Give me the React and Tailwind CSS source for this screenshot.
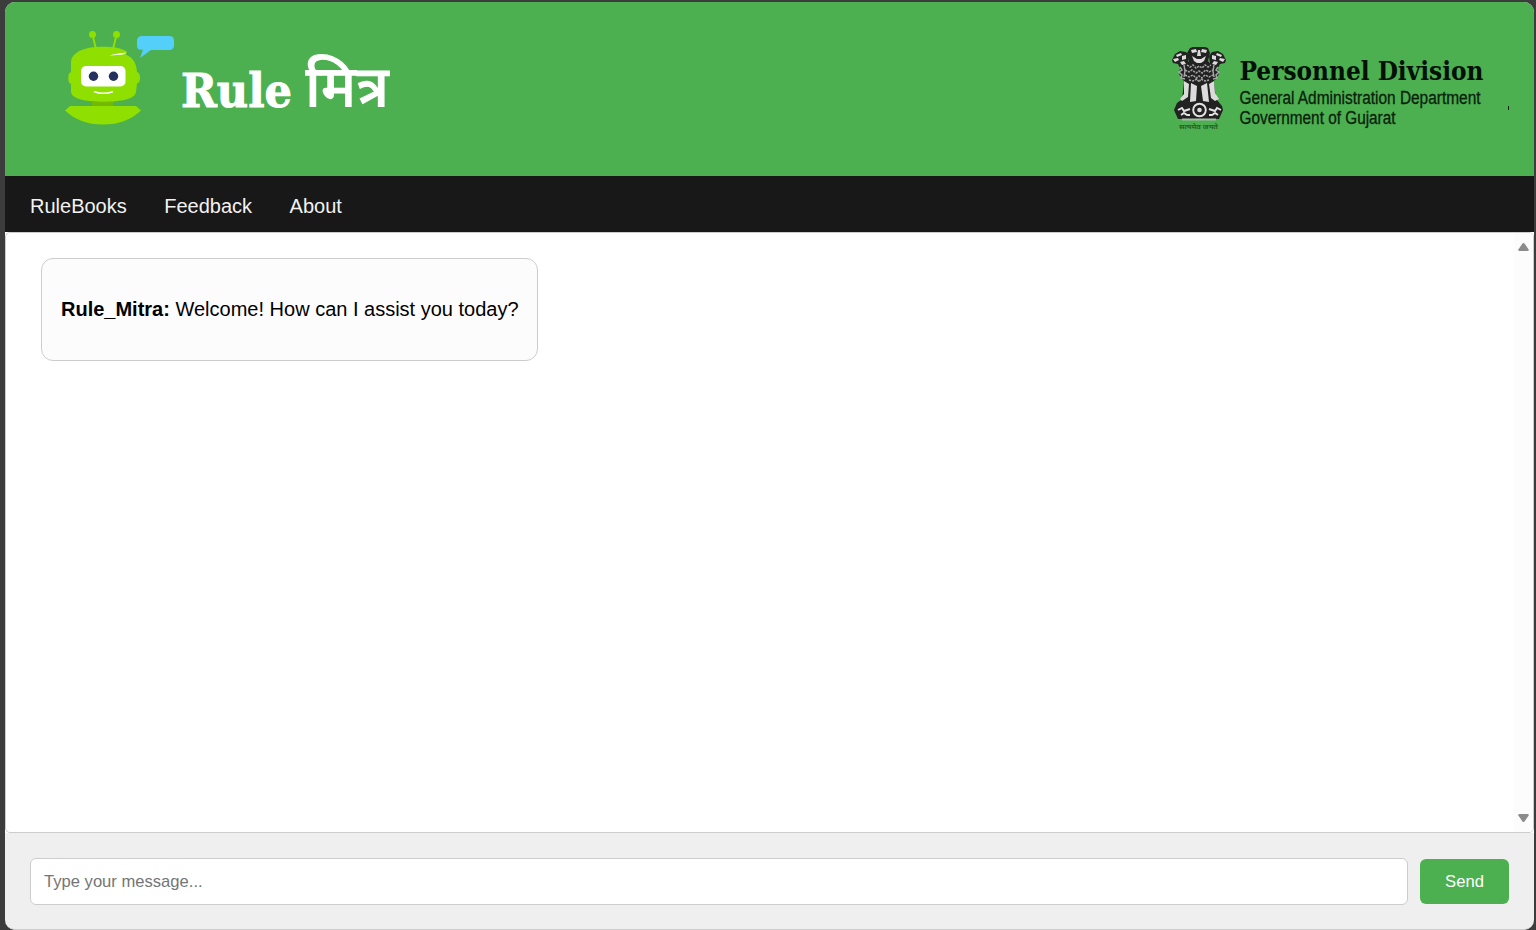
function BotLogo() {
  return (
    <svg className="block shrink-0" width="120" height="110" viewBox="0 0 120 110" aria-hidden="true">
      <g fill="#8fdf00">
        <circle cx="37.500" cy="14.500" r="3.500" />
        <circle cx="61.500" cy="14.500" r="3.500" />
        <path d="M37.500 15L41 29M61.500 15L58 29" stroke="#8fdf00" strokeWidth="2" />
        <path d="M48 26.700C58 26.700 67 28 72 31.700L70.500 34.500C77 37 81.500 42 82 52C84.300 52.500 85 55 85 58C85 61 84.300 63 82 63.500L81 72C80 79 67 81.700 48.500 81.700C30 81.700 17 79 16 72V64C14 63.500 13.300 61 13.300 58C13.300 55 14 52.500 16 52V42C17 31 31 26.700 48 26.700Z" />
        <path d="M15 86h66l5 4.500C76 100 64 104.500 48 104.500S20 100 10 90.500z" />
      </g>
      <path d="M37 82h21v4H37z" fill="#73b900" />
      <path d="M54 36C59 33.800 65 33.200 71.500 32.800C70 34.200 67 34.800 64 34.800C60 34.800 57 35.600 54 36Z" fill="#fff" />
      <rect x="26" y="46" width="44.500" height="20.500" rx="5" fill="#fff" />
      <circle cx="38.500" cy="56.200" r="4.700" fill="#24305e" />
      <circle cx="58.500" cy="56.200" r="4.700" fill="#24305e" />
      <path d="M39.500 71.700c5 2.200 13 2.200 18 0" fill="none" stroke="#fff" strokeWidth="1.500" strokeLinecap="round" />
      <path d="M86.500 16h28.500a4.500 4.500 0 0 1 4 4.500v5a4.500 4.500 0 0 1-4 4.400H96L85 38l3-8.200h-2a4 4 0 0 1-4-4v-5.300a4.500 4.500 0 0 1 4.500-4.500z" fill="#54cffa" />
    </svg>
  );
}

function Emblem() {
  return (
    <svg className="block shrink-0" width="60" height="86" viewBox="0 0 60 86" aria-hidden="true">
      <g fill="#222">
        <path d="M21 2l3-1h12l3 1 2 5-2 8 4 5 3 8-1 8 2 18H13l2-18-2-8 3-8 4-5-2-8z" />
        <path d="M3 14l3-6 5-3 6 1 3 4-1 8 0 17-5-1-4-6 1-6-2-4-5-1zM57 14l-3-6-5-3-6 1-3 4 1 8 0 17 5-1 4-6-1-6 2-4 5-1z" />
        <path d="M12 54l36 0 5 6 1 4-4 9H9L5 64l3-7z" />
      </g>
      <g fill="#dcdcdc">
        <path d="M22 4l5-1 1 3-5 1zM38 4l-5-1-1 3 5 1zM29 4h2l1 6h-4zM23 10l5 3h4l5-3-2 5-3 2h-4l-3-2z" />
        <path d="M7 9l5-2 1 2-5 2zM53 9l-5-2-1 2 5 2zM4 13l5-1 1 2-4 2zM56 13l-5-1-1 2 4 2zM13 10l4-1 0 4-4 1zM47 10l-4-1 0 4 4 1zM11 16l4-1 2 3-4 1zM49 16l-4-1-2 3 4 1z" />
        <path d="M15 35l5 3-1 13-6 4-2-2 4-5zM22 37l6 3-1 15-6 1zM32 40l6-3 2 19-6-1zM40 38l5-3 1 12 4 6-4 2-4-3z" />
      </g>
      <g fill="none" stroke="#a5a5a5" strokeWidth="1.500">
        <path d="M18 19l3 2 3-2 3 3 3-2 3 2 3-3 3 2 3-2M16 24l4 2 3-2 4 3 3-2 3 2 4-3 3 2 4-2M16 29l4 2 4-2 3 3 3-2 3 2 3-3 4 2 4-2M20 34l4 1 4-2 2 3 2-3 4 2 4-1" strokeDasharray="2.200 1" />
        <path d="M11 21l2 3-3 2 3 3-1 3 4 1M15 19l1 6-1 6M49 21l-2 3 3 2-3 3 1 3-4 1M45 19l-1 6 1 6" />
      </g>
      <g fill="none" stroke="#e3e3e3" strokeWidth="1.900">
        <circle cx="30.500" cy="64" r="6.300" />
        <path d="M9 64l4-2 2 3 6-2M52 64l-4-2-2 3-6-2M12 69l3-2 3 2h3M49 69l-3-2-3 2h-3" />
      </g>
      <circle cx="30.500" cy="64" r="2.300" fill="#dcdcdc" />
      <path d="M13 73.500h34" stroke="#a9bba9" strokeWidth="1.800" />
      <text x="10" y="83" textLength="39" lengthAdjust="spacingAndGlyphs" fontSize="6" fontWeight="700" fill="#27632a" className="font-['Noto_Sans',sans-serif]">सत्यमेव जयते</text>
    </svg>
  );
}

function Header() {
  return (
    <header className="flex h-[174px] shrink-0 items-start justify-between bg-[#4caf50] pl-[50px] pt-[18px]">
      <div className="flex">
        <BotLogo />
        <svg className="-ml-1 block shrink-0 overflow-visible" width="230" height="110" viewBox="171 20 230 110">
          <g fill="#fff">
            <text x="181" y="106.500" fontSize="47" fontWeight="700" stroke="#fff" strokeWidth="0.900" textLength="111" lengthAdjust="spacingAndGlyphs" className="font-['DejaVu_Serif_Condensed','DejaVu_Serif',serif]">Rule</text>
            <text x="305" y="107" fontSize="58.500" fontWeight="600" textLength="84" lengthAdjust="spacingAndGlyphs" className="font-['Noto_Sans_Devanagari','Noto_Sans',sans-serif]">मित्र</text>
          </g>
        </svg>
      </div>
      <div className="flex pr-[22px] pt-[26px]">
        <Emblem />
        <svg className="block shrink-0 overflow-visible" width="283" height="90" viewBox="1229 46 283 90">
          <text x="1239.500" y="80" fontSize="26.500" fontWeight="700" textLength="244" lengthAdjust="spacingAndGlyphs" fill="#041006" className="font-['DejaVu_Serif_Condensed','DejaVu_Serif',serif]">Personnel Division</text>
          <g fontSize="18" fill="#0a210b" stroke="#0a210b" strokeWidth="0.300" className="font-['Liberation_Sans',sans-serif]">
            <text x="1239.500" y="103.500" textLength="241" lengthAdjust="spacingAndGlyphs">General Administration Department</text>
            <text x="1239.500" y="123.500" textLength="156" lengthAdjust="spacingAndGlyphs">Government of Gujarat</text>
          </g>
          <path d="M1508 106h1v4h-1z" fill="#0a210b" />
        </svg>
      </div>
    </header>
  );
}

function ScrollRail() {
  return (
    <div className="flex w-[19px] flex-col items-center justify-between bg-[#fcfcfc] py-[9px]">
      <svg width="12" height="10" viewBox="0.500 0 12 10"><path d="M5 1.500q1-1 2 0l4.200 6q.4 1.300-1 1.500H1.800q-1.400-.2-1-1.500z" fill="#8b8b8b" /></svg>
      <svg width="12" height="10" viewBox="0.500 0 12 10"><path d="M5 8.500q1 1 2 0l4.200-6q.4-1.300-1-1.500H1.800q-1.400.2-1 1.500z" fill="#8b8b8b" /></svg>
    </div>
  );
}

export default function App() {
  return (
    <div className="h-[930px] w-full overflow-hidden bg-[#3c3c3c] pl-[5px] pr-[2px] pt-[2px] font-['Liberation_Sans',Arial,sans-serif]">
      <div className="flex h-[928px] flex-col overflow-hidden rounded-[10px] bg-[#efefef]">
        <Header />
        <nav className="flex h-14 shrink-0 items-center gap-[37.500px] bg-[#181818] pl-[25px] pt-1 text-[20px] text-[#f2f2f2]">
          <a href="#rulebooks">RuleBooks</a>
          <a href="#feedback">Feedback</a>
          <a href="#about">About</a>
        </nav>
        <div className="shrink-0 bg-white">
          <main className="flex h-[601px] justify-between overflow-hidden rounded-[5px] border border-[#ccc] bg-white">
            <div className="pl-[35px] pt-[25px]">
              <div className="flex h-[103px] w-[497px] items-center whitespace-nowrap rounded-[12px] border border-[#ccc] bg-[#fcfcfc] pb-0.5 pl-[19px] text-[20px] text-black">
                <p><strong>Rule_Mitra:</strong> Welcome! How can I assist you today?</p>
              </div>
            </div>
            <ScrollRail />
          </main>
        </div>
        <form className="flex grow items-start gap-3 rounded-b-[10px] border-b border-[#ccc] px-[25px] pt-[25px] text-[16.600px]" onSubmit={(e) => e.preventDefault()}>
          <input className="h-[47px] grow rounded-[6px] border border-[#ccc] bg-white px-[13px] placeholder:text-[#757575]" placeholder="Type your message..." />
          <button className="mt-px h-[45px] w-[89px] rounded-[6px] bg-[#4caf50] pt-px text-white">Send</button>
        </form>
      </div>
    </div>
  );
}
